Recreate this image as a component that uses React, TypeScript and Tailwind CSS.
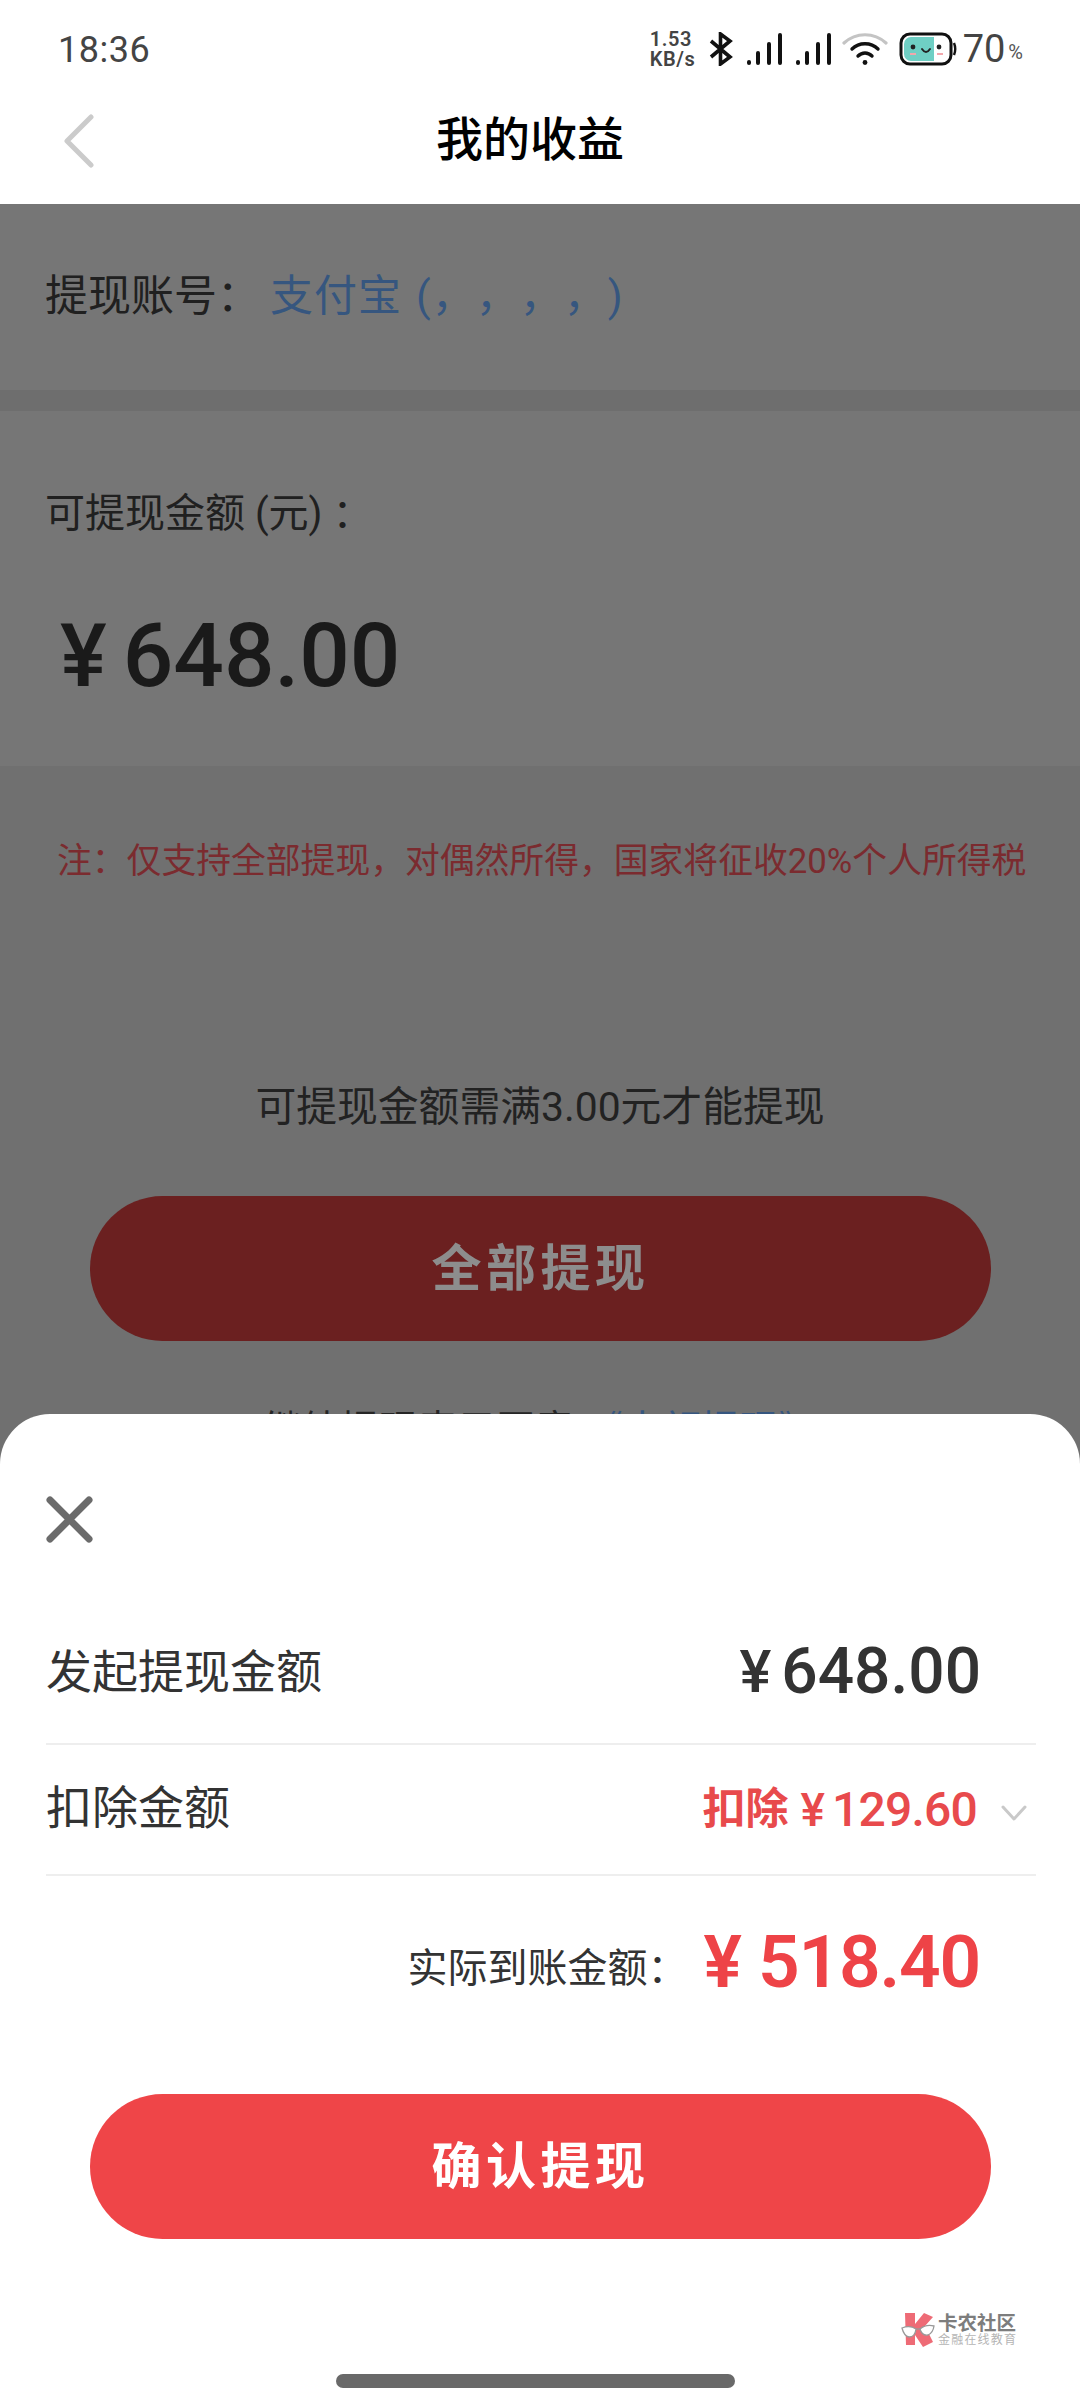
const FONT = "font-['Roboto','Noto_Sans_CJK_SC',sans-serif] [text-spacing-trim:space-all]";

function Signal() {
  return (
    <svg width="36" height="33" viewBox="0 0 36 33" fill="#111">
      <rect x="0" y="27" width="4" height="5" rx="2" />
      <rect x="9" y="18" width="4" height="14" rx="2" />
      <rect x="20" y="9" width="4" height="23" rx="2" />
      <rect x="31" y="0" width="4" height="32" rx="2" />
    </svg>
  );
}

function StatusBar() {
  return (
    <div className="flex h-[70px] items-center justify-between bg-white pl-[58px] pr-[57px] pt-[28px]">
      <span className="mt-[2px] text-[36px] leading-none tracking-[0.5px] text-[#444]">18:36</span>
      <div className="flex items-center">
        <div className="flex w-[50px] flex-col font-semibold tracking-[0.6px] text-[#444]">
          <span className="text-[20px] leading-[20px]">1.53</span>
          <span className="text-[20px] leading-[20px]">KB/s</span>
        </div>
        <svg className="ml-[9px]" width="24" height="34" viewBox="0 0 24 34" fill="none" stroke="#111" strokeWidth="3.6" strokeLinejoin="miter">
          <path d="M2 9 L21 25 L11.5 32 V2 L21 9 L2 25" />
        </svg>
        <div className="ml-[14px] flex gap-[13px]">
          <Signal />
          <Signal />
        </div>
        <svg className="ml-[10px]" width="46" height="34" viewBox="0 0 46 34" fill="none" strokeLinecap="round">
          <path d="M2 11 C14 0 32 0 44 11" stroke="#c4c4c4" strokeWidth="3.2" />
          <path d="M10 17 C17 10 29 10 36 17" stroke="#111" strokeWidth="3.4" />
          <path d="M16 24 C20 20 26 20 30 24" stroke="#111" strokeWidth="3.4" />
          <circle cx="23" cy="30.5" r="2.4" fill="#111" />
        </svg>
        <svg className="ml-[11px]" width="58" height="34" viewBox="0 0 58 34">
          <rect x="2" y="2" width="50" height="30" rx="9" fill="#fff" stroke="#111" strokeWidth="3" />
          <path d="M5 12 a7 7 0 0 1 7 -7 H35 V29 H12 a7 7 0 0 1 -7 -7 Z" fill="#6fcfc4" />
          <path d="M55 11 Q57.5 17 55 23" fill="none" stroke="#111" strokeWidth="2.4" />
          <circle cx="14" cy="15" r="2.4" fill="#222" />
          <circle cx="40" cy="15" r="2.4" fill="#222" />
          <path d="M23 17 Q27 23 31 17" fill="none" stroke="#222" strokeWidth="2" strokeLinecap="round" />
          <rect x="11" y="21" width="6" height="2" fill="#f2a7ac" />
          <rect x="38" y="21" width="6" height="2" fill="#f2a7ac" />
        </svg>
        <span className="ml-[6px] text-[38px] leading-none text-[#444]">70</span>
        <span className="ml-[3px] mt-[6px] text-[20px] leading-none text-[#555]">%</span>
      </div>
    </div>
  );
}

function Header() {
  return (
    <div className="relative flex h-[134px] items-center justify-center bg-white pr-[20px] pt-[4px]">
      <svg className="absolute left-[62px] top-[44px]" width="34" height="54" viewBox="0 0 34 54" fill="none" stroke="#cbcbcb" strokeWidth="5" strokeLinecap="round" strokeLinejoin="round">
        <path d="M29 3 L5 27 L29 51" />
      </svg>
      <h1 className="text-[47px] font-medium leading-none text-black">我的收益</h1>
    </div>
  );
}

function Page() {
  return (
    <div className="flex flex-1 flex-col bg-[#707070]">
      <div className="flex h-[186px] items-center bg-[#767676] pb-[2px] pl-[45px] text-[43px] leading-none">
        <span className="text-[#202020]">提现账号：</span>
        <span className="ml-[10px] tracking-[1px] text-[#36567f]">支付宝<span className="ml-[14px]">(</span>，，，，)</span>
      </div>
      <div className="h-[21px] bg-[#6e6e6e]" />
      <div className="flex h-[355px] flex-col bg-[#767676] pl-[45px]">
        <span className="mt-[83px] text-[40px] leading-none text-[#202020]">可提现金额 (元) ：</span>
        <div className="ml-[15px] mt-[77px] flex items-center font-medium leading-none text-[#1a1a1a]">
          <span className="text-[88px]">¥</span>
          <span className="ml-[16px] text-[89px]">648.00</span>
        </div>
      </div>
      <p className="ml-[57px] mt-[78px] text-[34.8px] leading-none text-[#7b2b2f]">注：仅支持全部提现，对偶然所得，国家将征收20%个人所得税</p>
      <p className="mt-[208px] text-center text-[40.8px] leading-none text-[#222]">可提现金额需满3.00元才能提现</p>
      <div className="ml-[90px] mt-[68px] flex h-[145px] w-[901px] items-center justify-center rounded-[73px] bg-[#6b2020] pt-[2px] text-[50px] font-bold tracking-[4.5px] text-[#8d8d8d]">
        全部提现
      </div>
      <p className="mt-[70px] text-center text-[39px] leading-none text-[#262626]">
        继续提现表示同意 <span className="text-[#36567f]">《大额提现》</span>
      </p>
    </div>
  );
}

function Sheet() {
  return (
    <div className="absolute inset-x-0 bottom-0 flex h-[986px] flex-col rounded-t-[50px] bg-white">
      <svg className="ml-[46px] mt-[82px]" width="47" height="47" viewBox="0 0 47 47" fill="none" stroke="#6b6b6b" strokeWidth="7" strokeLinecap="round">
        <path d="M4 4 L43 43 M43 4 L4 43" />
      </svg>
      <div className="mx-[46px] mt-[57px] flex h-[145px] w-[990px] items-center justify-between border-b-2 border-[#eeeeee] pr-[55px]">
        <span className="text-[46px] leading-none text-[#333]">发起提现金额</span>
        <span className="flex items-center font-medium leading-none text-[#333]">
          <span className="text-[60px]">¥</span>
          <span className="ml-[10px] text-[64px]">648.00</span>
        </span>
      </div>
      <div className="mx-[46px] flex h-[131px] w-[990px] items-center justify-between border-b-2 border-[#eeeeee] pr-[9px]">
        <span className="mb-[3px] text-[46px] leading-none text-[#333]">扣除金额</span>
        <span className="flex items-center leading-none text-[#e84a4c]">
          <span className="text-[43px] font-bold">扣除</span>
          <span className="ml-[12px] text-[46px] font-medium">¥</span>
          <span className="ml-[7px] text-[48px] font-medium tracking-[-0.8px]">129.60</span>
          <svg className="ml-[24px] mt-[6px]" width="26" height="16" viewBox="0 0 26 16" fill="none" stroke="#c9c9c9" strokeWidth="3" strokeLinecap="round" strokeLinejoin="round">
            <path d="M2 2 L13 14 L24 2" />
          </svg>
        </span>
      </div>
      <div className="mx-[46px] flex h-[218px] items-start justify-end pr-[54px] pt-[50px]">
        <span className="mr-[16px] mt-[23px] text-[40px] leading-none text-[#333]">实际到账金额：</span>
        <span className="flex items-center font-semibold leading-none text-[#ee4347]">
          <span className="text-[72px]">¥</span>
          <span className="ml-[16px] text-[73px] tracking-[-1.2px]">518.40</span>
        </span>
      </div>
      <div className="ml-[90px] flex h-[145px] w-[901px] items-center justify-center rounded-[73px] bg-[#ef4548] pt-[2px] text-[50px] font-bold tracking-[4.5px] text-white">
        确认提现
      </div>
      <div className="ml-[336px] mt-[135px] h-[14px] w-[399px] rounded-full bg-[#696969]" />
    </div>
  );
}

function Watermark() {
  return (
    <div className="absolute left-[900px] top-[2312px] flex items-center">
      <svg width="36" height="36" viewBox="0 0 36 36">
        <path d="M5 1 H15 V12 L24 1 L33 5 L25 14 L33 30 L23 35 L15 23 V33 H6 Z" fill="#ee6b76" />
        <path d="M2 16 Q10 13 16 17 Q15 25 9 25 Q4 24 2 16 Z" fill="#fff" stroke="#999" strokeWidth="1.3" />
        <path d="M34 14 Q26 12 20 17 Q22 24 28 23 Q33 21 34 14 Z" fill="#fff" stroke="#999" strokeWidth="1.3" />
        <path d="M16 17 H20" stroke="#999" strokeWidth="1.3" />
      </svg>
      <div className="ml-[2px] flex flex-col">
        <span className="text-[19.5px] font-bold leading-[21px] text-[#7d7d7d]">卡农社区</span>
        <span className="text-[12px] leading-[13px] tracking-[1.2px] text-[#b5b5b5]">金融在线教育</span>
      </div>
    </div>
  );
}

export default function App() {
  return (
    <div className={`relative flex h-[2400px] w-[1080px] flex-col overflow-hidden ${FONT}`}>
      <StatusBar />
      <Header />
      <Page />
      <Sheet />
      <Watermark />
    </div>
  );
}
